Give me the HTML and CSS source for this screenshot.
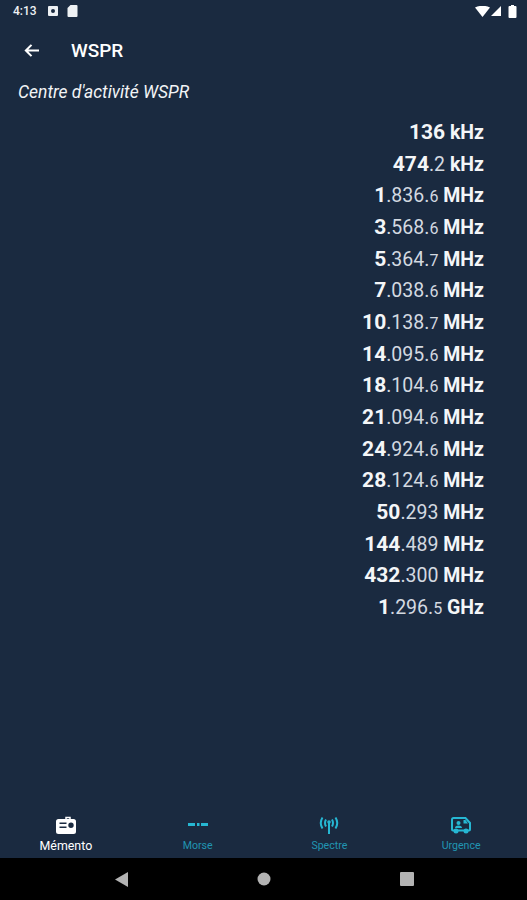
FILE: index.html
```html
<!DOCTYPE html>
<html lang="fr">
  <head>
    <meta charset="UTF-8" />
    <meta name="viewport" content="width=device-width, initial-scale=1.0" />
    <title>WSPR</title>
    <link rel="stylesheet" href="styles.css">
  </head>
  <body>
    <div class="screen">
      <div class="status-bar">
        <span class="clock">4:13</span>
        <svg class="status-icon" width="10" height="10" viewBox="0 0 10 10"><path fill="#eef1f4" fill-rule="evenodd" d="M1 0h8a1 1 0 0 1 1 1v8a1 1 0 0 1-1 1H1a1 1 0 0 1-1-1V1a1 1 0 0 1 1-1zm4 3a2 2 0 1 0 0 4 2 2 0 0 0 0-4z"/></svg>
        <svg class="status-icon" width="11" height="12" viewBox="0 0 10 12"><path fill="#eef1f4" d="M3 0h6a1 1 0 0 1 1 1v10a1 1 0 0 1-1 1H1a1 1 0 0 1-1-1V3z"/></svg>
        <span class="spacer"></span>
        <svg width="15" height="11" viewBox="0 0 15 11"><path fill="#fff" d="M0 1.500Q7.500-2 15 1.500L7.500 11z"/></svg>
        <svg class="signal" width="10" height="10" viewBox="0 0 10 10"><path fill="#fff" d="M10 0v10H0z"/></svg>
        <svg class="battery" width="9" height="13" viewBox="0 0 8 13"><path fill="#fff" d="M2.500 0h3v1H7a1 1 0 0 1 1 1v10a1 1 0 0 1-1 1H1a1 1 0 0 1-1-1V2a1 1 0 0 1 1-1h1.500z"/></svg>
      </div>

      <div class="toolbar">
        <svg class="back" width="15" height="15" viewBox="0 0 16 16"><path fill="none" stroke="#fff" stroke-width="2.200" d="M16 8H2M8 2 2 8l6 6"/></svg>
        <h1>WSPR</h1>
      </div>

      <p class="subtitle">Centre d'activité WSPR</p>

      <ul class="freq-list">
        <li><b>136</b> <b class="unit">kHz</b></li>
        <li><b>474</b>.2 <b class="unit">kHz</b></li>
        <li><b>1</b>.836.<small>6</small> <b class="unit">MHz</b></li>
        <li><b>3</b>.568.<small>6</small> <b class="unit">MHz</b></li>
        <li><b>5</b>.364.<small>7</small> <b class="unit">MHz</b></li>
        <li><b>7</b>.038.<small>6</small> <b class="unit">MHz</b></li>
        <li><b>10</b>.138.<small>7</small> <b class="unit">MHz</b></li>
        <li><b>14</b>.095.<small>6</small> <b class="unit">MHz</b></li>
        <li><b>18</b>.104.<small>6</small> <b class="unit">MHz</b></li>
        <li><b>21</b>.094.<small>6</small> <b class="unit">MHz</b></li>
        <li><b>24</b>.924.<small>6</small> <b class="unit">MHz</b></li>
        <li><b>28</b>.124.<small>6</small> <b class="unit">MHz</b></li>
        <li><b>50</b>.293 <b class="unit">MHz</b></li>
        <li><b>144</b>.489 <b class="unit">MHz</b></li>
        <li><b>432</b>.300 <b class="unit">MHz</b></li>
        <li><b>1</b>.296.<small>5</small> <b class="unit">GHz</b></li>
      </ul>

      <nav class="bottom-nav">
        <div class="tab tab-active">
          <svg width="20" height="18" viewBox="0 0 20 18"><path fill="none" stroke="#fff" stroke-width="1.500" d="M10 3V1.500h4V3"/><path fill="#fff" fill-rule="evenodd" d="M2.500 3h15A2.500 2.500 0 0 1 20 5.500v10a2.500 2.500 0 0 1-2.500 2.500h-15A2.500 2.500 0 0 1 0 15.500v-10A2.500 2.500 0 0 1 2.500 3zM3.500 6.500V8h7V6.500zm0 4V12h7v-1.500zm11.500-4a2.700 2.700 0 1 0 0 5.400 2.700 2.700 0 0 0 0-5.400z"/></svg>
          <span>Mémento</span>
        </div>
        <div class="tab">
          <svg width="20" height="18" viewBox="0 0 20 18"><path fill="#26b7d3" d="M0 7h7v3H0zM9 7h2.500v3H9zM13 7h7v3h-7z"/></svg>
          <span>Morse</span>
        </div>
        <div class="tab">
          <svg width="20" height="18" viewBox="0 0 20 18"><g fill="none" stroke="#26b7d3" stroke-width="2"><path d="M10 6v12M7 3.500Q5 7 7 10.500M13 3.500Q15 7 13 10.500M3.500 1.500Q0 7 3.500 12.500M16.500 1.500Q20 7 16.500 12.500"/></g><circle cx="10" cy="6" r="1.800" fill="#26b7d3"/></svg>
          <span>Spectre</span>
        </div>
        <div class="tab">
          <svg width="20" height="18" viewBox="0 0 20 18"><path fill="none" stroke="#26b7d3" stroke-width="2" d="M2.500 2h12l4.500 5v6.500a1 1 0 0 1-1 1H2a1 1 0 0 1-1-1v-10A1.500 1.500 0 0 1 2.500 2z"/><path fill="#26b7d3" d="M12.500 4h2L17 7.500h-4.500zM4 12a3.500 2.500 0 0 1 7 0z"/><circle cx="7.500" cy="7" r="2" fill="#26b7d3"/><circle cx="5" cy="15" r="2.500" fill="#26b7d3"/><circle cx="15" cy="15" r="2.500" fill="#26b7d3"/></svg>
          <span>Urgence</span>
        </div>
      </nav>

      <div class="system-nav">
        <svg width="13" height="15" viewBox="0 0 13 15"><path fill="#b3b3b3" d="M13 0v15L0 7.500z"/></svg>
        <svg width="14" height="14" viewBox="0 0 14 14"><circle cx="7" cy="7" r="6.500" fill="#b3b3b3"/></svg>
        <svg width="14" height="14" viewBox="0 0 14 14"><rect width="14" height="14" rx="1" fill="#b3b3b3"/></svg>
      </div>
    </div>
  </body>
</html>
```

FILE: styles.css
```css
* {
  margin: 0;
  padding: 0;
  box-sizing: border-box;
}

body {
  background-color: #1a2a40;
  color: #fff;
  font-family: Roboto, sans-serif;
}

.screen {
  display: flex;
  flex-direction: column;
  height: 900px;
}

.status-bar {
  display: flex;
  align-items: center;
  height: 24px;
  padding: 0 8px 2px 13px;
  color: #eef1f4;
}

.clock {
  font-size: 12px;
  font-weight: 500;
  margin-right: 11px;
}

.status-icon {
  margin-right: 9px;
}

.spacer {
  flex: 1;
}

.signal {
  margin: 0 7px 0 1px;
}

.battery {
  margin-right: 2px;
}

.toolbar {
  display: flex;
  align-items: center;
  height: 52px;
  padding-left: 24px;
}

.toolbar h1 {
  font-size: 19px;
  font-weight: 500;
  margin-left: 32px;
}

.subtitle {
  padding: 2px 0 0 18px;
  font-size: 17.5px;
  font-style: italic;
  line-height: 28px;
  color: #f2f4f6;
}

.freq-list {
  list-style: none;
  flex: 1;
  margin-top: 11px;
  padding-right: 43px;
  text-align: right;
}

.freq-list li {
  height: 31.67px;
  line-height: 31.67px;
  font-size: 19.5px;
  color: #d3d9e0;
}

.freq-list b {
  font-size: 21px;
  font-weight: 700;
  color: #f4f6f8;
}

.freq-list .unit {
  font-size: 19.5px;
}

.freq-list small {
  font-size: 16px;
}

.bottom-nav {
  display: flex;
  height: 53px;
}

.tab {
  flex: 1;
  display: flex;
  flex-direction: column;
  align-items: center;
  padding-top: 11px;
  font-size: 10.6px;
  color: #2195b2;
}

.tab span {
  line-height: 14px;
}

.tab svg {
  margin-bottom: 5px;
}

.tab-active {
  font-size: 12.4px;
  color: #fff;
}

.system-nav {
  display: flex;
  align-items: center;
  justify-content: space-between;
  height: 42px;
  padding: 0 113px 0 115px;
  background-color: #000;
}
```
